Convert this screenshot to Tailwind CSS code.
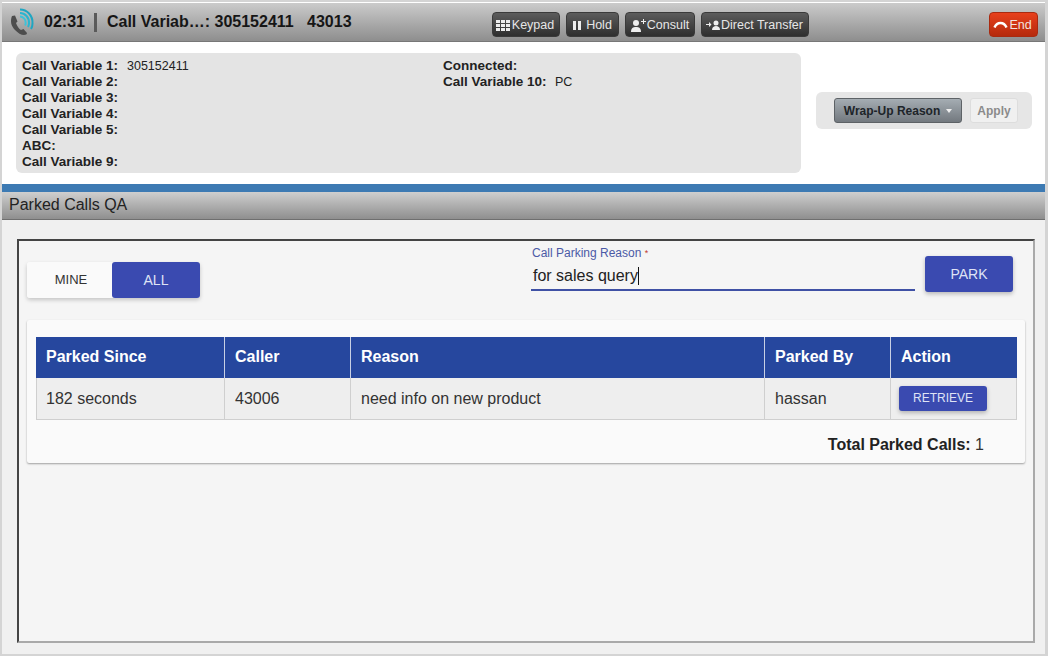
<!DOCTYPE html>
<html>
<head>
<meta charset="utf-8">
<script src="https://cdn.jsdelivr.net/npm/@tailwindcss/browser@4"></script>
</head>
<body class="m-0">
<div class="w-[1048px] h-[656px] overflow-hidden bg-white font-['Liberation_Sans',Arial,sans-serif] border-[2px] border-r-[3px] border-[#d4d4d4] flex flex-col text-[#222]">
  <!-- call bar -->
  <div class="h-[39px] mt-px shrink-0 flex items-center bg-gradient-to-b from-[#cbcbcb] to-[#8e8e8e] border-b border-[#777] relative">
    <svg class="ml-[5px] w-[28px] h-[30px]" viewBox="0 0 28 30" fill="none">
      <path d="M5 9c-2 5-1 10 3 14 3 3 6 5 9 5 2 0 3-1 3-2l-3.500-4-2.500 1c-2-1-4-4-5-7l1.500-1.500-2.500-6z" fill="#4d4d4d"/>
      <path d="M13 2.500c7 0 13 6 12.500 14 0 2-.5 4-1.500 5.500" stroke="#1fa6c2" stroke-width="2"/>
      <path d="M13 6c5 0 9.500 4.500 9 10.500 0 1.500-.5 2.500-1 3.500" stroke="#2ab5cf" stroke-width="2"/>
      <path d="M13 9.500c3 0 6 3 5.700 6.500 0 1-.3 2-.7 2.500" stroke="#3cc3da" stroke-width="2"/>
    </svg>
    <span class="ml-[9px] text-[16px] font-bold text-[#161616]">02:31</span>
    <span class="ml-[9px] w-[3px] h-[19px] bg-[#5a5a5a]"></span>
    <span class="ml-[10px] text-[16px] font-bold text-[#161616] whitespace-pre">Call Variab…: 305152411   43013</span>
    <div class="absolute left-[490px] top-[9px] flex gap-[6px]">
      <div class="h-[25px] w-[68px] pt-px pr-[2px] rounded-[4px] bg-gradient-to-b from-[#5c5c5c] to-[#2f2f2f] border border-[#3a3a3a] flex items-center justify-center gap-[2px] text-[#e6e6e6] text-[12.500px]">
        <svg class="w-[14px] h-[11px]" viewBox="0 0 14 11" fill="#eee"><rect x="0" y="0" width="4" height="3"/><rect x="5" y="0" width="4" height="3"/><rect x="10" y="0" width="4" height="3"/><rect x="0" y="4" width="4" height="3"/><rect x="5" y="4" width="4" height="3"/><rect x="10" y="4" width="4" height="3"/><rect x="0" y="8" width="4" height="3"/><rect x="5" y="8" width="4" height="3"/><rect x="10" y="8" width="4" height="3"/></svg>
        Keypad</div>
      <div class="h-[25px] w-[53px] pt-px rounded-[4px] bg-gradient-to-b from-[#5c5c5c] to-[#2f2f2f] border border-[#3a3a3a] flex items-center justify-center gap-[5px] text-[#e6e6e6] text-[12.500px]">
        <svg class="w-[8px] h-[9px]" viewBox="0 0 8 9" fill="#eee"><rect width="3" height="9"/><rect x="5" width="3" height="9"/></svg>
        Hold</div>
      <div class="h-[25px] w-[70px] pt-px rounded-[4px] bg-gradient-to-b from-[#5c5c5c] to-[#2f2f2f] border border-[#3a3a3a] flex items-center justify-center gap-[1px] text-[#e6e6e6] text-[12.500px]">
        <svg class="w-[15px] h-[13px]" viewBox="0 0 15 13" fill="#eee"><circle cx="5" cy="4" r="3"/><path d="M0 13c0-4 2-5 5-5s5 1 5 5z"/><path d="M10 2h2V0h1v2h2v1h-2v2h-1V3h-2z"/></svg>
        Consult</div>
      <div class="h-[25px] w-[108px] pt-px pr-[1px] rounded-[4px] bg-gradient-to-b from-[#5c5c5c] to-[#2f2f2f] border border-[#3a3a3a] flex items-center justify-center gap-0 text-[#e6e6e6] text-[12.500px]">
        <svg class="w-[15px] h-[12px]" viewBox="0 0 15 12" fill="#eee"><path d="M0 5h3V3l2.500 2.500L3 8V6H0z"/><circle cx="10" cy="4" r="2.500"/><path d="M6 11c0-3 2-4 4-4s4 1 4 4z"/></svg>
        Direct Transfer</div>
    </div>
    <div class="absolute left-[987px] top-[9px] h-[25px] w-[49px] pt-px pr-[2px] rounded-[4px] bg-gradient-to-b from-[#e8401c] to-[#b52a0c] border border-[#a92a10] flex items-center justify-center gap-px text-[#f3e3df] text-[12.500px]">
      <svg class="w-[15px] h-[8px]" viewBox="0 0 15 8" fill="none"><path d="M1.500 6.500C3 3 5 2 7.500 2s4.500 1 6 4.500" stroke="#fff" stroke-width="2.500"/></svg>
      End</div>
  </div>

  <!-- info row -->
  <div class="h-[142px] shrink-0 flex relative">
    <div class="ml-[14px] mt-[11px] w-[785px] h-[120px] rounded-[6px] bg-[#e4e4e4] flex pl-[6px] pt-[5px] text-[13.500px] leading-[16px]">
      <div class="w-[421px] flex flex-col">
        <div class="flex"><b class="font-bold w-[105px]">Call Variable 1:</b><span class="text-[12.500px]">305152411</span></div>
        <b class="font-bold">Call Variable 2:</b>
        <b class="font-bold">Call Variable 3:</b>
        <b class="font-bold">Call Variable 4:</b>
        <b class="font-bold">Call Variable 5:</b>
        <b class="font-bold">ABC:</b>
        <b class="font-bold">Call Variable 9:</b>
      </div>
      <div class="flex flex-col">
        <b class="font-bold">Connected:</b>
        <div class="flex"><b class="font-bold w-[112px]">Call Variable 10:</b><span class="text-[12.500px]">PC</span></div>
      </div>
    </div>
    <div class="ml-[15px] mt-[50px] w-[216px] h-[37px] rounded-[6px] bg-[#e6e6e6] flex items-center pl-[18px] gap-[8px]">
      <div class="w-[128px] h-[25px] rounded-[3px] bg-gradient-to-b from-[#a5adb3] to-[#73797f] border border-[#5d6266] flex items-center justify-center gap-[6px] text-[12px] font-bold text-[#1d2429]">Wrap-Up Reason
        <span class="w-0 h-0 border-l-[3px] border-r-[3px] border-t-[4px] border-l-transparent border-r-transparent border-t-[#eee]"></span>
      </div>
      <div class="w-[48px] h-[25px] rounded-[3px] bg-[#f0f0f0] border border-[#ddd] flex items-center justify-center text-[12px] font-bold text-[#8b8b8b]">Apply</div>
    </div>
  </div>

  <!-- section -->
  <div class="h-[8px] shrink-0 bg-[#3d7ab3]"></div>
  <div class="h-[28px] shrink-0 bg-gradient-to-b from-[#cfcfcf] to-[#8f8f8f] border-b border-[#6f6f6f] pl-[7px] text-[16px] leading-[25px] text-[#222]">Parked Calls QA</div>

  <!-- body -->
  <div class="flex-1 bg-[#f0f0f0] pt-[19px] pl-[15px]">
    <div class="w-[1018px] h-[404px] bg-[#f5f5f5] border-t-2 border-l-2 border-t-[#444] border-l-[#444] border-r-2 border-b-2 border-r-[#a9a9a9] border-b-[#a9a9a9] flex flex-col pl-[8px]">
      <div class="h-[79px] shrink-0 flex relative">
        <div class="mt-[21px] h-[36px] flex rounded-[3px] shadow-[0_2px_4px_rgba(0,0,0,0.2)]">
          <div class="w-[85px] pl-[3px] bg-[#fafafa] rounded-l-[3px] flex items-center justify-center text-[13px] text-[#333]">MINE</div>
          <div class="w-[88px] bg-[#3a4ab0] rounded-[3px] flex items-center justify-center text-[14px] text-[#dfe3f5]">ALL</div>
        </div>
        <div class="ml-[331px] w-[384px] mt-[4px] h-[46px] border-b-2 border-[#3f51a5] flex flex-col">
          <div class="pl-px text-[12px] leading-[16px] text-[#4b5aa6]">Call Parking Reason <span class="text-[#c0392b] text-[9px] align-top">*</span></div>
          <div class="pl-[2px] mt-[5px] text-[16px] leading-[20px] text-[#222] flex items-center">for sales query<span class="w-px h-[18px] bg-[#111]"></span></div>
        </div>
        <div class="ml-[10px] mt-[15px] w-[88px] h-[36px] rounded-[3px] bg-[#3a4ab0] shadow-[0_2px_4px_rgba(0,0,0,0.25)] flex items-center justify-center text-[14px] text-[#dfe3f5]">PARK</div>
      </div>
      <div class="w-[998px] h-[143px] bg-[#fafafa] shadow-[0_1px_2px_rgba(0,0,0,0.35)] rounded-[2px] pt-[17px] pl-[9px] flex flex-col">
        <div class="w-[981px] flex h-[41px] bg-[#26479e] text-white font-bold text-[16px] leading-[39px]">
          <div class="w-[189px] pl-[10px] border-r border-[#c8d0e4]">Parked Since</div>
          <div class="w-[126px] pl-[10px] border-r border-[#c8d0e4]">Caller</div>
          <div class="w-[414px] pl-[10px] border-r border-[#c8d0e4]">Reason</div>
          <div class="w-[126px] pl-[10px] border-r border-[#c8d0e4]">Parked By</div>
          <div class="w-[126px] pl-[10px]">Action</div>
        </div>
        <div class="w-[981px] flex h-[42px] bg-[#eeeeee] text-[16px] leading-[41px] text-[#333] border-b border-[#cfcfcf]">
          <div class="w-[189px] pl-[9px] border-r border-l border-[#cfcfcf]">182 seconds</div>
          <div class="w-[126px] pl-[10px] border-r border-[#cfcfcf]">43006</div>
          <div class="w-[414px] pl-[10px] border-r border-[#cfcfcf]">need info on new product</div>
          <div class="w-[126px] pl-[10px] border-r border-[#cfcfcf]">hassan</div>
          <div class="w-[126px] pl-[8px] border-r border-[#cfcfcf] flex pt-[8px]">
            <div class="w-[88px] h-[25px] pb-px rounded-[3px] bg-[#3a4ab0] shadow-[0_2px_4px_rgba(0,0,0,0.25)] flex items-center justify-center text-[12px] leading-[16px] text-[#dfe3f5]">RETRIEVE</div>
          </div>
        </div>
        <div class="w-[948px] mt-[15px] text-right text-[16px] leading-[20px] text-[#333]"><b class="font-bold text-[#222]">Total Parked Calls:</b> 1</div>
      </div>
    </div>
  </div>
</div>
</body>
</html>
